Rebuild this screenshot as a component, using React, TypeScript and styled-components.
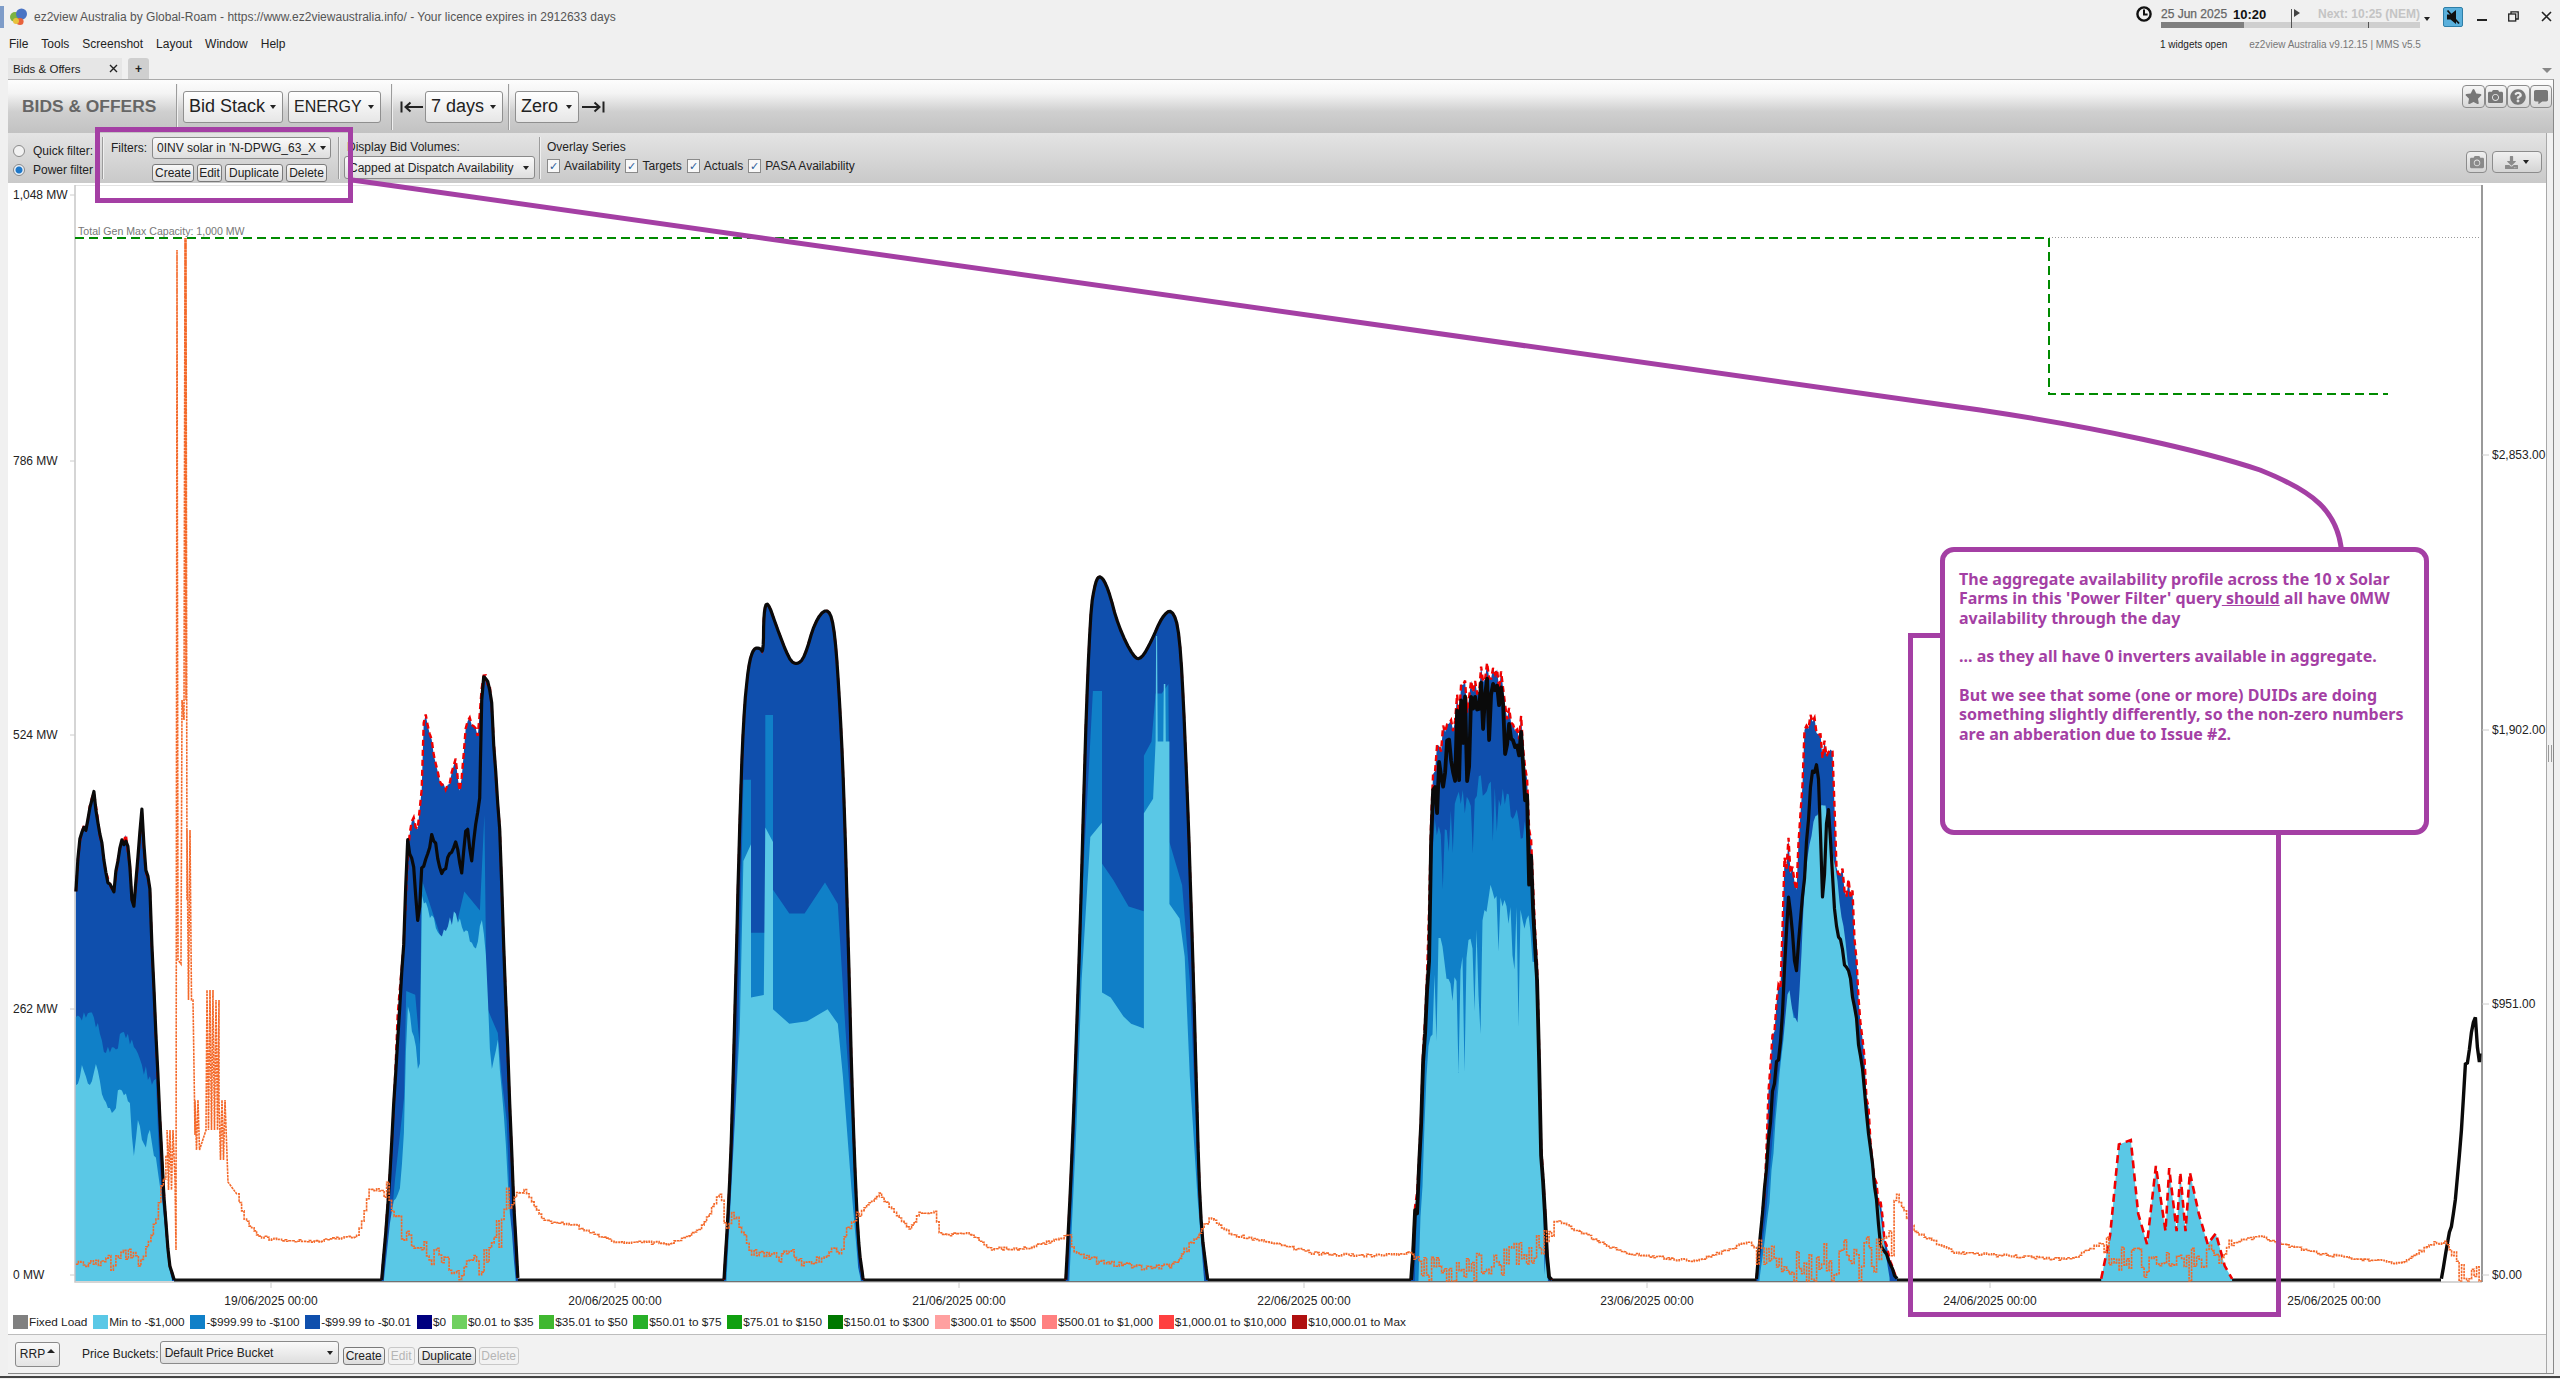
import React from 'react';
import styled, { createGlobalStyle } from 'styled-components';
import { FaStar, FaCamera, FaQuestionCircle, FaCommentAlt, FaDownload } from 'react-icons/fa';

type Pt = [number, number];

const PURPLE = '#a43fa4';
const LIGHT = '#5ac8e6';
const MID = '#1080c8';
const DARK = '#0f4fad';
const BASE = 1281;

// zoomed reference coordinates back to page pixels
const z6 = (p: Pt[]): Pt[] => p.map(([x, y]) => [x / 2.24, 700 + y / 2.613]);
const z7 = (p: Pt[]): Pt[] => p.map(([x, y]) => [700 + x / 1.96, 550 + y / 2.09]);
const z8 = (p: Pt[]): Pt[] => p.map(([x, y]) => [1400 + x / 1.352, 650 + y / 2.306]);

let seed = 48271;
const rnd = () => {
  seed = (seed * 16807) % 2147483647;
  return seed / 2147483647;
};

const yAt = (pts: Pt[], x: number) => {
  for (let i = 1; i < pts.length; i++) {
    if (x <= pts[i][0]) {
      const [x0, y0] = pts[i - 1];
      const [x1, y1] = pts[i];
      if (x1 === x0) return y1;
      return y0 + ((y1 - y0) * (x - x0)) / (x1 - x0);
    }
  }
  return pts[pts.length - 1][1];
};

const noisy = (pts: Pt[], amp: number, step = 2, spike = 0): Pt[] => {
  const out: Pt[] = [];
  const end = pts[pts.length - 1][0];
  for (let x = pts[0][0]; x <= end; x += step) {
    const base = yAt(pts, x);
    const fade = Math.min(1, (BASE - base) / 70);
    const r = rnd();
    const extra = r > 0.8 ? rnd() * spike : 0;
    out.push([x, Math.min(BASE, base + ((rnd() - 0.5) * amp + extra) * fade)]);
  }
  out.push(pts[pts.length - 1]);
  return out;
};

// corner cutting, for the calm days whose curves are smooth
const smooth = (pts: Pt[]): Pt[] => {
  let cur = pts;
  for (let k = 0; k < 2; k++) {
    const next: Pt[] = [cur[0]];
    for (let i = 0; i < cur.length - 1; i++) {
      const [ax, ay] = cur[i];
      const [bx, by] = cur[i + 1];
      next.push([ax * 0.75 + bx * 0.25, ay * 0.75 + by * 0.25]);
      next.push([ax * 0.25 + bx * 0.75, ay * 0.25 + by * 0.75]);
    }
    next.push(cur[cur.length - 1]);
    cur = next;
  }
  return cur;
};

const below = (layer: Pt[], top: Pt[]): Pt[] => layer.map(([x, y]) => [x, Math.max(y, yAt(top, x))]);
const line = (p: Pt[]) => 'M' + p.map(([x, y]) => `${x.toFixed(1)} ${y.toFixed(1)}`).join('L');
const area = (p: Pt[]) => `${line(p)}L${p[p.length - 1][0].toFixed(1)} ${BASE}L${p[0][0].toFixed(1)} ${BASE}Z`;

interface Day {
  top: Pt[];
  mid: Pt[];
  light: Pt[];
  actual: Pt[];
}

const day1Base = z6([[170, 1515], [170, 500], [178, 365], [190, 330], [195, 345], [200, 280], [210, 240], [222, 340], [240, 470], [255, 500], [268, 380], [282, 360], [290, 420], [298, 570], [318, 285], [325, 450], [335, 470], [340, 640], [350, 900], [365, 1250], [378, 1470], [390, 1515]]);
const day1Top = noisy(day1Base, 7);
const day2Base = z6([[855, 1515], [870, 1300], [885, 1000], [890, 830], [905, 620], [915, 360], [925, 300], [935, 350], [945, 240], [950, 20], [965, 100], [985, 220], [1005, 230], [1020, 150], [1030, 250], [1045, 50], [1060, 60], [1070, 100], [1082, -70], [1100, -25], [1105, 100], [1120, 350], [1130, 700], [1140, 1000], [1150, 1300], [1160, 1510]]);
const day2Top = noisy(day2Base, 8);
const day3Top = smooth(z7([[47, 1525], [60, 1300], [70, 900], [77, 600], [85, 350], [95, 240], [105, 205], [118, 205], [124, 215], [125, 130], [132, 105], [150, 160], [175, 230], [190, 240], [205, 225], [225, 150], [248, 120], [262, 150], [272, 280], [282, 500], [290, 800], [300, 1200], [310, 1450], [320, 1525]]));
const day4Top = smooth(z7([[717, 1525], [730, 1250], [745, 800], [755, 400], [765, 130], [775, 65], [785, 52], [800, 80], [820, 160], [850, 225], [865, 228], [885, 190], [905, 140], [925, 122], [940, 170], [950, 370], [960, 650], [970, 1000], [980, 1400], [995, 1525]]));
const day5Base = z8([[15, 1452], [25, 1170], [35, 800], [45, 250], [50, 230], [65, 180], [85, 110], [100, 100], [115, 55], [135, 60], [150, 190], [165, 180], [175, 400], [185, 700], [190, 1100], [200, 1440], [205, 1452]]);
const day5Top = noisy(day5Base, 34);
const day6Base = z8([[482, 1450], [495, 1200], [500, 950], [515, 750], [520, 500], [525, 460], [535, 570], [548, 180], [560, 160], [572, 230], [585, 240], [590, 500], [598, 520], [612, 580], [620, 800], [630, 1000], [640, 1200], [660, 1400], [672, 1450]]);
const day6Top = noisy(day6Base, 26);

const days: Day[] = [
  {
    top: day1Top,
    mid: below(noisy(z6([[170, 1515], [170, 840], [205, 800], [230, 900], [260, 920], [270, 870], [300, 900], [320, 960], [350, 1000], [360, 1280], [378, 1490], [385, 1515]]), 14), day1Top),
    light: below(noisy(z6([[170, 1515], [170, 1010], [185, 960], [200, 1000], [215, 960], [235, 1060], [258, 1080], [265, 1020], [290, 1040], [298, 1200], [310, 1100], [325, 1180], [335, 1110], [345, 1180], [360, 1280], [378, 1480], [385, 1515]]), 10), day1Top),
    actual: noisy(day1Base, 9),
  },
  {
    top: day2Top,
    mid: below(z6([[865, 1515], [885, 1250], [905, 1040], [910, 760], [930, 770], [940, 900], [945, 470], [990, 630], [1020, 600], [1040, 500], [1075, 550], [1085, 300], [1090, 800], [1100, 830], [1115, 870], [1125, 1000], [1135, 1100], [1145, 1400], [1155, 1515]]), day2Top),
    light: below(noisy(z6([[860, 1515], [880, 1300], [895, 1300], [905, 1120], [912, 800], [930, 900], [940, 1000], [945, 510], [985, 620], [1020, 560], [1040, 610], [1050, 620], [1065, 670], [1080, 560], [1090, 690], [1100, 980], [1115, 880], [1128, 1080], [1140, 1300], [1155, 1515]]), 12), day2Top),
    actual: noisy(z6([[855, 1515], [870, 1300], [885, 1000], [890, 900], [905, 620], [912, 370], [925, 420], [937, 590], [945, 440], [970, 350], [990, 460], [1020, 370], [1035, 450], [1045, 310], [1055, 430], [1075, 250], [1080, -60], [1082, -70], [1100, -25], [1105, 100], [1120, 350], [1130, 700], [1140, 1000], [1150, 1300], [1160, 1510]]), 8),
  },
  {
    top: day3Top,
    mid: z7([[50, 1525], [65, 1300], [75, 1000], [85, 480], [100, 480], [100, 800], [128, 800], [128, 345], [143, 345], [143, 710], [175, 760], [205, 760], [245, 695], [270, 740], [285, 1000], [298, 1200], [310, 1500], [315, 1525]]),
    light: z7([[52, 1525], [68, 1200], [78, 1000], [85, 650], [100, 615], [100, 935], [125, 930], [128, 580], [143, 610], [143, 960], [175, 990], [210, 985], [250, 960], [270, 990], [280, 1100], [298, 1350], [310, 1500], [315, 1525]]),
    actual: day3Top,
  },
  {
    top: day4Top,
    mid: z7([[722, 1525], [735, 1200], [750, 700], [770, 295], [788, 295], [788, 655], [810, 690], [840, 745], [870, 755], [870, 430], [885, 400], [893, 300], [905, 300], [918, 280], [920, 610], [945, 700], [960, 900], [972, 1200], [985, 1525]]),
    light: z7([[724, 1525], [738, 1200], [748, 900], [765, 600], [788, 570], [788, 925], [805, 935], [830, 975], [845, 990], [870, 1000], [870, 550], [888, 520], [893, 400], [894, 180], [896, 180], [897, 400], [908, 400], [909, 280], [912, 280], [913, 400], [920, 400], [920, 740], [940, 770], [950, 850], [960, 1100], [975, 1350], [988, 1525]]),
    actual: day4Top,
  },
  {
    top: day5Top,
    mid: below(noisy(z8([[20, 1452], [35, 700], [45, 420], [60, 400], [100, 320], [125, 300], [165, 400], [178, 500], [188, 1000], [198, 1452]]), 30, 2, 70), day5Top),
    light: below(noisy(z8([[25, 1452], [35, 1000], [45, 800], [50, 650], [60, 700], [70, 800], [100, 650], [125, 560], [145, 600], [160, 620], [175, 630], [185, 800], [190, 1100], [200, 1452]]), 26, 2, 110), day5Top),
    actual: day5Top.map(([x, y]) => {
      const k = Math.min(1, (BASE - y) / 300);
      return [x, Math.min(BASE, y + (16 + (rnd() > 0.55 ? rnd() * 55 : 0)) * k)] as Pt;
    }),
  },
  {
    top: day6Top,
    mid: below(z8([[484, 1450], [495, 1300], [500, 1200], [510, 1000], [525, 800], [540, 880], [548, 700], [560, 600], [580, 600], [600, 800], [640, 1200], [660, 1450]]), day6Top),
    light: below(noisy(z8([[486, 1450], [498, 1300], [510, 1040], [525, 780], [537, 880], [548, 520], [560, 380], [575, 350], [598, 620], [620, 900], [640, 1200], [662, 1450]]), 10), day6Top),
    actual: noisy(z8([[482, 1450], [495, 1200], [505, 1000], [515, 900], [525, 550], [535, 750], [548, 500], [555, 300], [565, 240], [572, 620], [578, 350], [590, 650], [610, 760], [620, 900], [630, 1050], [640, 1200], [650, 1380], [660, 1400], [668, 1440], [672, 1450]]), 14),
  },
];

const day7Top = z8([[948, 1450], [960, 1350], [972, 1140], [988, 1130], [998, 1300], [1010, 1370], [1022, 1190], [1035, 1340], [1040, 1195], [1050, 1340], [1055, 1205], [1062, 1340], [1068, 1205], [1080, 1300], [1092, 1370], [1103, 1345], [1115, 1420], [1125, 1450]]);
const day8Actual = z8([[1408, 1450], [1420, 1330], [1425, 1300], [1435, 1100], [1440, 960], [1445, 930], [1450, 850], [1455, 840], [1458, 960], [1460, 930]]);

const zig = (x0: number, x1: number, y0: number, y1: number): Pt[] => {
  const out: Pt[] = [];
  let up = true;
  for (let x = x0; x <= x1; x += 1.5) {
    out.push([x, up ? y0 : y1]);
    up = !up;
  }
  return out;
};

const rrpBefore: Pt[] = z6([[170, 1470], [230, 1465], [285, 1440], [310, 1470], [330, 1430], [350, 1350], [360, 1280], [372, 1190]]);
const rrpSpike: Pt[] = [
  ...zig(167, 174, 1130, 1190),
  [175, 1180], [176, 1250], [177, 250], [178, 960], [181, 964], [182, 700], [184, 720], [185, 238], [186, 700], [186, 238], [187, 900],
  ...zig(187, 192, 830, 1000),
  [193, 1000], [195, 1135],
  ...zig(195, 200, 1100, 1150),
  [206, 1130],
  ...zig(207, 213, 990, 1130),
  ...zig(213, 219, 1000, 1130),
  ...zig(219, 225, 1100, 1160),
  [228, 1182],
];
const rrpAfter: Pt[] = [
  ...z6([[530, 1290], [545, 1350], [575, 1400], [610, 1410], [700, 1415], [800, 1400], [815, 1340], [825, 1280], [870, 1280], [875, 1350], [910, 1400], [950, 1440], [1000, 1460], [1050, 1490], [1100, 1450], [1130, 1310], [1175, 1280], [1215, 1360], [1290, 1375], [1370, 1415], [1500, 1420]]),
  ...z7([[0, 1420], [40, 1340], [50, 1420], [65, 1385], [100, 1470], [180, 1470], [205, 1495], [270, 1460], [300, 1395], [350, 1345], [410, 1420], [430, 1385], [460, 1385], [470, 1430], [530, 1430], [565, 1460], [640, 1460], [700, 1440], [725, 1430], [730, 1470], [800, 1490], [870, 1500], [930, 1490], [980, 1420], [1000, 1395], [1040, 1430], [1130, 1450], [1200, 1470], [1300, 1475], [1395, 1470]]),
  ...z8([[20, 1410], [60, 1430], [110, 1420], [170, 1390], [195, 1360], [210, 1315], [240, 1340], [270, 1365], [300, 1390], [400, 1410], [470, 1365], [490, 1395], [530, 1420], [600, 1400], [640, 1390], [665, 1330], [672, 1265], [695, 1340], [750, 1390], [850, 1400], [905, 1405], [950, 1365], [970, 1395], [1030, 1420], [1090, 1395], [1120, 1370], [1165, 1350], [1180, 1365], [1250, 1395], [1350, 1415], [1400, 1365], [1420, 1395], [1430, 1440], [1455, 1420], [1460, 1440]]),
];

const dayBands: [number, number, number][] = [
  [382, 518, 24], [724, 863, 8], [1066, 1208, 5], [1412, 1552, 26], [1756, 1897, 34], [2101, 2232, 24], [2441, 2482, 30], [75, 174, 10],
];
const rrpNoise = (pts: Pt[]): Pt[] => {
  const out: Pt[] = [];
  for (let x = pts[0][0]; x <= pts[pts.length - 1][0]; x += 2.5) {
    const band = dayBands.find(([a, b]) => x >= a && x <= b);
    const amp = band ? band[2] : 3;
    const y = yAt(pts, x) + (rnd() - 0.5) * amp + (band && rnd() > 0.85 ? rnd() * amp : 0);
    out.push([x, Math.min(BASE, y)]);
    out.push([x + 2.5, Math.min(BASE, y)]);
  }
  return out;
};
const rrpLine = [...rrpNoise(rrpBefore), ...rrpSpike, ...rrpNoise(rrpAfter)];

const leftAxis: [string, number][] = [['1,048 MW', 199], ['786 MW', 465], ['524 MW', 739], ['262 MW', 1013], ['0 MW', 1279]];
const rightAxis: [string, number][] = [['$2,853.00', 459], ['$1,902.00', 734], ['$951.00', 1008], ['$0.00', 1279]];
const dateTicks: [string, number][] = [
  ['19/06/2025 00:00', 271], ['20/06/2025 00:00', 615], ['21/06/2025 00:00', 959], ['22/06/2025 00:00', 1304],
  ['23/06/2025 00:00', 1647], ['24/06/2025 00:00', 1990], ['25/06/2025 00:00', 2334],
];

const legendItems: [string, string][] = [
  ['#808080', 'Fixed Load'], [LIGHT, 'Min to -$1,000'], [MID, '-$999.99 to -$100'], [DARK, '-$99.99 to -$0.01'], ['#000080', '$0'],
  ['#70d060', '$0.01 to $35'], ['#40b830', '$35.01 to $50'], ['#28b028', '$50.01 to $75'], ['#10a010', '$75.01 to $150'], ['#007800', '$150.01 to $300'],
  ['#ffa0a0', '$300.01 to $500'], ['#ff8080', '$500.01 to $1,000'], ['#ff4040', '$1,000.01 to $10,000'], ['#b01010', '$10,000.01 to Max'],
];

const GlobalStyle = createGlobalStyle`
  html, body {
    margin: 0;
    padding: 0;
    background: #f0f0f0;
    overflow: hidden;
  }
  body {
    font-family: "Liberation Sans", Arial, sans-serif;
    font-size: 12px;
    color: #222;
  }
`;

const Page = styled.div`
  position: relative;
  width: 2560px;
  height: 1379px;
  display: flex;
  flex-direction: column;
  background: #f0f0f0;
  overflow: hidden;
`;

const TopArea = styled.div`
  display: flex;
  justify-content: space-between;
  height: 58px;
`;

const TitleColumn = styled.div`
  display: flex;
  flex-direction: column;
`;

const TitleRow = styled.div`
  display: flex;
  align-items: center;
  height: 33px;
  gap: 6px;
`;

const WindowTab = styled.div`
  width: 4px;
  height: 22px;
  background: #7e9cc8;
`;

const TitleText = styled.span`
  color: #555;
  font-size: 12px;
`;

const MenuRow = styled.div`
  display: flex;
  gap: 13px;
  padding-left: 9px;
  height: 22px;
  align-items: center;
  color: #222;
`;

const StatusColumn = styled.div`
  display: flex;
  flex-direction: column;
  width: 424px;
  padding-top: 6px;
  box-sizing: border-box;
  position: relative;
`;

const ClockRow = styled.div`
  display: flex;
  align-items: flex-start;
  height: 30px;
`;

const Timeline = styled.div`
  width: 259px;
  margin-left: 9px;
  position: relative;
`;

const DateRow = styled.div`
  display: flex;
  height: 16px;
  align-items: center;
  font-weight: 700;
`;

const DateText = styled.span`
  color: #666;
  font-weight: 400;
  -webkit-text-stroke: 0.25px #666;
`;

const TimeText = styled.span`
  margin-left: 6px;
  color: #111;
  font-size: 13px;
`;

const NextText = styled.span`
  margin-left: auto;
  color: #c4c4c4;
  white-space: nowrap;
`;

const ProgressTrack = styled.div`
  height: 6px;
  background: #cfcfcf;
`;

const ProgressFill = styled.div`
  width: 83px;
  height: 100%;
  background: #7f7f7f;
`;

const TimeMarker = styled.div`
  position: absolute;
  left: 130px;
  bottom: 0;
  width: 1px;
  height: 19px;
  background: #555;
`;

const PlayMark = styled.div`
  position: absolute;
  left: 133px;
  top: 3px;
  width: 0;
  height: 0;
  border-left: 6px solid #444;
  border-top: 4px solid transparent;
  border-bottom: 4px solid transparent;
`;

const TickMark = styled.div`
  position: absolute;
  left: 207px;
  bottom: 0;
  width: 1px;
  height: 6px;
  background: #555;
`;

const SmallCaret = styled.div`
  width: 0;
  height: 0;
  margin: 11px 0 0 4px;
  border-top: 4px solid #222;
  border-left: 3.5px solid transparent;
  border-right: 3.5px solid transparent;
`;

const MuteButton = styled.div`
  width: 20px;
  height: 20px;
  margin: 1px 0 0 13px;
  background: #5ab0dc;
  border: 1px solid #2f7fa8;
  border-radius: 2px;
  display: flex;
  align-items: center;
  justify-content: center;
  box-sizing: border-box;
`;

const WindowControls = styled.div`
  display: flex;
  margin-left: 9px;
  align-items: center;
  height: 20px;
`;

const WindowButton = styled.div<{ $w: number }>`
  width: ${(p) => p.$w}px;
  display: flex;
  justify-content: center;
  color: #222;
`;

const InfoRow = styled.div`
  display: flex;
  padding-left: 24px;
  height: 16px;
  align-items: center;
`;

const InfoText = styled.span<{ $muted?: boolean }>`
  color: ${(p) => (p.$muted ? '#777' : '#222')};
  margin-left: ${(p) => (p.$muted ? '22px' : '0')};
  font-size: 10px;
`;

const TabRow = styled.div`
  display: flex;
  height: 21px;
  padding-left: 8px;
  gap: 6px;
  position: relative;
`;

const Tab = styled.div`
  width: 114px;
  background: #e6e6e6;
  display: flex;
  align-items: center;
  justify-content: space-between;
  padding: 0 4px 0 5px;
  box-sizing: border-box;
  font-size: 11.5px;
`;

const AddTab = styled.div`
  width: 21px;
  background: #cfcfcf;
  border-radius: 3px 3px 0 0;
  display: flex;
  align-items: center;
  justify-content: center;
  font-weight: 700;
`;

const OverflowCaret = styled.div`
  position: absolute;
  right: 8px;
  top: 10px;
  width: 0;
  height: 0;
  border-top: 5px solid #888;
  border-left: 5px solid transparent;
  border-right: 5px solid transparent;
`;

const Widget = styled.div`
  margin-left: 8px;
  width: 2546px;
  height: 1295px;
  display: flex;
  flex-direction: column;
  border-top: 1px solid #aaa;
  border-bottom: 1px solid #888;
  border-right: 1px solid #888;
  box-sizing: border-box;
  background: #fff;
`;

const HeaderBar = styled.div`
  height: 53px;
  flex: none;
  display: flex;
  align-items: center;
  background: linear-gradient(#fdfdfd 0%, #f4f4f4 25%, #cfcfcf 60%, #c2c2c2 100%);
`;

const WidgetTitle = styled.div`
  width: 168px;
  padding-left: 14px;
  box-sizing: border-box;
  font-size: 17.4px;
  font-weight: 700;
  color: #666;
  white-space: nowrap;
`;

const Divider = styled.div<{ $h?: number }>`
  flex: none;
  width: 1px;
  height: ${(p) => p.$h ?? 46}px;
  background: #9c9c9c;
  border-right: 1px solid #f0f0f0;
`;

const HeaderGroup = styled.div<{ $gap: number; $left: number; $right: number }>`
  display: flex;
  align-items: center;
  gap: ${(p) => p.$gap}px;
  margin: 0 ${(p) => p.$right}px 0 ${(p) => p.$left}px;
`;

const BigButton = styled.div<{ $w: number; $fs?: number }>`
  width: ${(p) => p.$w}px;
  height: 32px;
  box-sizing: border-box;
  border: 1px solid #8f8f8f;
  border-radius: 3px;
  background: linear-gradient(#fff, #e6e6e6);
  display: flex;
  align-items: center;
  justify-content: space-between;
  padding: 0 6px 0 5px;
  font-size: ${(p) => p.$fs ?? 18}px;
  color: #222;
`;

const Caret = styled.span`
  width: 0;
  height: 0;
  border-top: 4px solid #222;
  border-left: 3px solid transparent;
  border-right: 3px solid transparent;
`;

const IconButtons = styled.div`
  margin-left: auto;
  align-self: flex-start;
  display: flex;
  margin-top: 5px;
  padding-right: 1px;
`;

const IconButton = styled.div`
  width: 22.5px;
  height: 23px;
  box-sizing: border-box;
  border: 1px solid #8c8c8c;
  border-radius: 4px;
  background: linear-gradient(#f6f6f6, #d8d8d8);
  display: flex;
  align-items: center;
  justify-content: center;
  color: #777;
`;

const Body = styled.div`
  flex: 1;
  display: flex;
  min-height: 0;
`;

const Content = styled.div`
  flex: 1;
  min-width: 0;
  display: flex;
  flex-direction: column;
`;

const ScrollTrack = styled.div`
  width: 7px;
  flex: none;
  background: #f1f1f1;
  border-left: 1px solid #a8a8a8;
  box-sizing: border-box;
  padding-top: 612px;
`;

const ScrollGrip = styled.div`
  width: 4px;
  height: 17px;
  margin-left: 1px;
  border-left: 1px solid #999;
  border-right: 1px solid #999;
  box-sizing: border-box;
`;

const FilterBar = styled.div`
  height: 50px;
  flex: none;
  display: flex;
  align-items: stretch;
  background: linear-gradient(#e4e4e4, #c9c9c9);
  border-bottom: 2px solid #fff;
  box-sizing: content-box;
`;

const RadioGroup = styled.div`
  width: 94px;
  padding-left: 5px;
  box-sizing: border-box;
  display: flex;
  flex-direction: column;
  justify-content: center;
  gap: 5px;
  padding-top: 4px;
  overflow: hidden;
`;

const RadioRow = styled.label`
  display: flex;
  align-items: center;
  gap: 8px;
  height: 14px;
  white-space: nowrap;
`;

const RadioDot = styled.span<{ $on?: boolean }>`
  flex: none;
  width: 12px;
  height: 12px;
  border-radius: 50%;
  border: 1px solid #8a8a8a;
  background: ${(p) => (p.$on ? 'radial-gradient(circle, #1f78c8 0 3px, #e8f0f8 4px)' : '#f2f2f2')};
  box-sizing: border-box;
`;

const SideDivider = styled(Divider)`
  align-self: center;
`;

const FilterGroup = styled.div`
  width: 234px;
  box-sizing: border-box;
  padding: 4px 0 0 7px;
  display: flex;
  flex-direction: column;
  gap: 5px;
`;

const FilterTop = styled.div`
  display: flex;
  align-items: center;
  gap: 5px;
`;

const SelectBox = styled.div<{ $w: number; $h: number }>`
  width: ${(p) => p.$w}px;
  height: ${(p) => p.$h}px;
  box-sizing: border-box;
  border: 1px solid #8a8a8a;
  border-radius: 3px;
  background: linear-gradient(#fafafa, #dedede);
  display: flex;
  align-items: center;
  justify-content: space-between;
  padding: 0 5px 0 4px;
  gap: 4px;
`;

const SelectText = styled.span`
  flex: 1;
  white-space: nowrap;
`;

const SmallButtons = styled.div`
  display: flex;
  gap: 3px;
  padding-left: 41px;
`;

const SmallButton = styled.div<{ $w: number; $off?: boolean }>`
  width: ${(p) => p.$w}px;
  height: 18px;
  box-sizing: border-box;
  border: 1px solid ${(p) => (p.$off ? '#c8c8c8' : '#7a7a7a')};
  border-radius: 3px;
  background: ${(p) => (p.$off ? '#f2f2f2' : 'linear-gradient(#f8f8f8, #dcdcdc)')};
  color: ${(p) => (p.$off ? '#b5b5b5' : '#222')};
  display: flex;
  align-items: center;
  justify-content: center;
`;

const StackGroup = styled.div`
  padding: 7px 4px 0 4px;
  display: flex;
  flex-direction: column;
  gap: 2px;
`;

const StackLabel = styled.span`
  height: 14px;
  white-space: nowrap;
  padding-left: 3px;
`;

const OverlayGroup = styled.div`
  padding: 7px 0 0 6px;
  display: flex;
  flex-direction: column;
  gap: 5px;
`;

const FieldLabel = styled.span`
  height: 14px;
  white-space: nowrap;
`;

const CheckRow = styled.div`
  display: flex;
  gap: 5px;
`;

const CheckItem = styled.label`
  display: flex;
  align-items: center;
  gap: 4px;
  white-space: nowrap;
`;

const CheckBox = styled.span`
  width: 13px;
  height: 14px;
  box-sizing: border-box;
  border: 1px solid #8a8a8a;
  background: #f8f8f8;
  color: #2a5c9a;
  font-size: 11px;
  line-height: 12px;
  text-align: center;
`;

const FilterTools = styled.div`
  margin-left: auto;
  display: flex;
  align-items: center;
  gap: 5px;
  padding: 8px 4px 0 0;
  align-self: center;
`;

const ToolButton = styled.div<{ $w: number }>`
  width: ${(p) => p.$w}px;
  height: 22px;
  box-sizing: border-box;
  border: 1px solid #8c8c8c;
  border-radius: 4px;
  background: linear-gradient(#f0f0f0, #d4d4d4);
  display: flex;
  align-items: center;
  justify-content: center;
  gap: 5px;
  color: #8a8a8a;
`;

const ChartSvg = styled.svg`
  display: block;
  flex: none;

  text {
    font-family: "Liberation Sans", Arial, sans-serif;
    font-size: 12px;
    fill: #222;
  }
`;

const Legend = styled.div`
  height: 24px;
  flex: none;
  display: flex;
  align-items: center;
  gap: 5.8px;
  padding-left: 5px;
  background: #fff;
  font-size: 11.8px;
`;

const LegendItem = styled.div`
  display: flex;
  align-items: center;
  gap: 1px;
  white-space: nowrap;
`;

const Swatch = styled.span<{ $c: string }>`
  width: 15px;
  height: 14px;
  background: ${(p) => p.$c};
`;

const BottomBar = styled.div`
  flex: 1;
  display: flex;
  align-items: center;
  border-top: 1px solid #bdbdbd;
  padding-left: 7px;
  background: #f2f2f2;
`;

const RrpButton = styled.div`
  width: 45px;
  height: 25px;
  box-sizing: border-box;
  border: 1px solid #8a8a8a;
  border-radius: 3px;
  background: linear-gradient(#fafafa, #e4e4e4);
  display: flex;
  align-items: center;
  justify-content: center;
  gap: 2px;
`;

const RrpCaret = styled.span`
  width: 0;
  height: 0;
  margin-bottom: 6px;
  border-bottom: 4px solid #222;
  border-left: 4px solid transparent;
  border-right: 4px solid transparent;
`;

const BucketLabel = styled.span`
  margin: 0 1px 0 22px;
`;

const BucketButtons = styled.div`
  display: flex;
  gap: 3px;
  margin-left: 4px;
  padding-top: 4px;
`;

const BucketSelect = styled(SelectBox)`
  margin-bottom: 3px;
`;

const TaskLine = styled.div`
  height: 2px;
  margin-top: 2px;
  background: #444;
`;

// annotation layer, drawn over the screenshot
const FilterHighlight = styled.div`
  position: absolute;
  left: 95px;
  top: 127px;
  width: 258px;
  height: 76px;
  box-sizing: border-box;
  border: 5px solid ${PURPLE};
`;

const CalloutBracket = styled.div`
  position: absolute;
  left: 1908px;
  top: 633px;
  width: 373px;
  height: 684px;
  box-sizing: border-box;
  border: 5px solid ${PURPLE};
`;

const Callout = styled.div`
  position: absolute;
  left: 1940px;
  top: 547px;
  width: 489px;
  height: 288px;
  box-sizing: border-box;
  padding: 18px 14px;
  border: 5px solid ${PURPLE};
  border-radius: 14px;
  background: #fff;
  color: ${PURPLE};
  font-family: "Noto Sans", "DejaVu Sans", sans-serif;
  font-weight: 700;
  font-size: 16px;
  line-height: 19.33px;
  white-space: nowrap;
`;

const CalloutLead = styled.svg`
  position: absolute;
  left: 0;
  top: 0;
  pointer-events: none;
`;

const ClockIcon = () => (
  <svg width="16" height="16" viewBox="0 0 16 16" fill="none" stroke="#111" strokeWidth="2.4" style={{ flex: 'none' }}>
    <circle cx="8" cy="8" r="6.6" />
    <path d="M8 3.6V8.6H11.6" strokeWidth="2" />
  </svg>
);

const MuteIcon = () => (
  <svg width="16" height="16" viewBox="0 0 16 16">
    <path d="M2 5.5H5.5L11 1V15L5.5 10.5H2Z" fill="#111" />
    <path d="M2.5 1.5L14 14.5" stroke="#111" strokeWidth="1.8" />
  </svg>
);

const ArrowToBar = ({ right }: { right?: boolean }) => (
  <svg width="24" height="12" viewBox="0 0 24 12" fill="none" stroke="#222" strokeWidth="2" style={{ transform: right ? 'scaleX(-1)' : undefined }}>
    <path d="M1.5 0.5V11.5" />
    <path d="M23 6H6" />
    <path d="M10.5 1.5L5.5 6L10.5 10.5" />
  </svg>
);

const Logo = () => (
  <svg width="18" height="18" viewBox="0 0 18 18" style={{ flex: 'none' }}>
    <circle cx="5" cy="9" r="5" fill="#7db343" />
    <circle cx="11.5" cy="6" r="5.5" fill="#4a74c4" />
    <circle cx="10" cy="13.5" r="3.6" fill="#e8623c" />
    <circle cx="6" cy="13" r="3" fill="#e8c23c" />
  </svg>
);

const App: React.FC = () => {
  return (
    <Page>
      <GlobalStyle />
      <TopArea>
        <TitleColumn>
          <TitleRow>
            <WindowTab />
            <Logo />
            <TitleText>ez2view Australia by Global-Roam - https://www.ez2viewaustralia.info/ - Your licence expires in 2912633 days</TitleText>
          </TitleRow>
          <MenuRow>
            {['File', 'Tools', 'Screenshot', 'Layout', 'Window', 'Help'].map((m) => (
              <span key={m}>{m}</span>
            ))}
          </MenuRow>
        </TitleColumn>
        <StatusColumn>
          <ClockRow>
            <ClockIcon />
            <Timeline>
              <DateRow>
                <DateText>25 Jun 2025</DateText>
                <TimeText>10:20</TimeText>
                <NextText>Next: 10:25 (NEM)</NextText>
              </DateRow>
              <ProgressTrack>
                <ProgressFill />
              </ProgressTrack>
              <TimeMarker />
              <PlayMark />
              <TickMark />
            </Timeline>
            <SmallCaret />
            <MuteButton>
              <MuteIcon />
            </MuteButton>
            <WindowControls>
              <WindowButton $w={20}>
                <svg width="10" height="10" viewBox="0 0 10 10"><path d="M0 9H10" stroke="#222" strokeWidth="2" /></svg>
              </WindowButton>
              <WindowButton $w={42}>
                <svg width="11" height="11" viewBox="0 0 11 11" fill="none" stroke="#222" strokeWidth="1.3">
                  <rect x="0.7" y="3" width="7" height="7" />
                  <path d="M3 3V0.8H10.2V8H8" />
                </svg>
              </WindowButton>
              <WindowButton $w={24}>
                <svg width="11" height="11" viewBox="0 0 11 11" stroke="#222" strokeWidth="1.6"><path d="M1 1L10 10M10 1L1 10" /></svg>
              </WindowButton>
            </WindowControls>
          </ClockRow>
          <InfoRow>
            <InfoText>1 widgets open</InfoText>
            <InfoText $muted>ez2view Australia v9.12.15 | MMS v5.5</InfoText>
          </InfoRow>
        </StatusColumn>
      </TopArea>

      <TabRow>
        <Tab>
          Bids &amp; Offers
          <svg width="9" height="9" viewBox="0 0 9 9" stroke="#222" strokeWidth="1.4"><path d="M1 1L8 8M8 1L1 8" /></svg>
        </Tab>
        <AddTab>+</AddTab>
        <OverflowCaret />
      </TabRow>

      <Widget>
        <HeaderBar>
          <WidgetTitle>BIDS &amp; OFFERS</WidgetTitle>
          <Divider />
          <HeaderGroup $gap={5} $left={5} $right={10}>
            <BigButton $w={100}>Bid Stack<Caret /></BigButton>
            <BigButton $w={93} $fs={16}>ENERGY<Caret /></BigButton>
          </HeaderGroup>
          <Divider />
          <HeaderGroup $gap={1} $left={7} $right={5}>
            <ArrowToBar />
            <BigButton $w={78}>7 days<Caret /></BigButton>
          </HeaderGroup>
          <Divider />
          <HeaderGroup $gap={2} $left={5} $right={0}>
            <BigButton $w={64}>Zero<Caret /></BigButton>
            <ArrowToBar right />
          </HeaderGroup>
          <IconButtons>
            <IconButton><FaStar size={17} /></IconButton>
            <IconButton><FaCamera size={15} /></IconButton>
            <IconButton><FaQuestionCircle size={16} /></IconButton>
            <IconButton><FaCommentAlt size={14} /></IconButton>
          </IconButtons>
        </HeaderBar>

        <Body>
          <Content>
            <FilterBar>
              <RadioGroup>
                <RadioRow><RadioDot />Quick filter:</RadioRow>
                <RadioRow><RadioDot $on />Power filter</RadioRow>
              </RadioGroup>
              <SideDivider $h={42} />
              <FilterGroup>
                <FilterTop>
                  <span>Filters:</span>
                  <SelectBox $w={179} $h={22}>
                    <SelectText>0INV solar in 'N-DPWG_63_X</SelectText>
                    <Caret />
                  </SelectBox>
                </FilterTop>
                <SmallButtons>
                  <SmallButton $w={42}>Create</SmallButton>
                  <SmallButton $w={25}>Edit</SmallButton>
                  <SmallButton $w={58}>Duplicate</SmallButton>
                  <SmallButton $w={41}>Delete</SmallButton>
                </SmallButtons>
              </FilterGroup>
              <SideDivider $h={42} />
              <StackGroup>
                <StackLabel>Display Bid Volumes:</StackLabel>
                <SelectBox $w={191} $h={23}>
                  <SelectText>Capped at Dispatch Availability</SelectText>
                  <Caret />
                </SelectBox>
              </StackGroup>
              <SideDivider $h={42} />
              <OverlayGroup>
                <FieldLabel>Overlay Series</FieldLabel>
                <CheckRow>
                  {['Availability', 'Targets', 'Actuals', 'PASA Availability'].map((c) => (
                    <CheckItem key={c}>
                      <CheckBox>✓</CheckBox>
                      {c}
                    </CheckItem>
                  ))}
                </CheckRow>
              </OverlayGroup>
              <FilterTools>
                <ToolButton $w={21}><FaCamera size={14} /></ToolButton>
                <ToolButton $w={50}><FaDownload size={13} /><Caret /></ToolButton>
              </FilterTools>
            </FilterBar>

            <ChartSvg width={2538} height={1125} viewBox="8 185 2538 1125">
              <path d="M75 185V1282H2482" fill="none" stroke="#c8c8c8" strokeWidth="1.5" />
              <path d="M75 185H2482" fill="none" stroke="#c8c8c8" strokeWidth="1" />
              <path d="M2482 185V1282" fill="none" stroke="#999" strokeWidth="2" />
              {leftAxis.map(([t, y]) => (
                <g key={t}>
                  <text x="13" y={y}>{t}</text>
                  <path d={`M70 ${y - 4}H75`} stroke="#ccc" />
                </g>
              ))}
              {rightAxis.map(([t, y]) => (
                <g key={t}>
                  <text x="2492" y={y}>{t}</text>
                  <path d={`M2482 ${y - 4}H2489`} stroke="#ccc" />
                </g>
              ))}
              {dateTicks.map(([t, x]) => (
                <g key={t}>
                  <path d={`M${x} 1282V1288`} stroke="#ccc" />
                  <text x={x} y="1305" textAnchor="middle">{t}</text>
                </g>
              ))}

              <text x="78" y="235" style={{ fontSize: 10.6, fill: '#777' }}>Total Gen Max Capacity: 1,000 MW</text>
              <path d="M2049 237.5H2482" stroke="#999" strokeDasharray="1 2" fill="none" />
              <path d="M75 238H2049V394H2388" stroke="#008a00" strokeWidth="2" strokeDasharray="9 5" fill="none" />

              <path d="M174 1280H2441" stroke="#111" strokeWidth="3" fill="none" />
              {days.map((d, i) => (
                <g key={i}>
                  <path d={area(d.top)} fill={DARK} />
                  <path d={area(d.mid)} fill={MID} />
                  <path d={area(d.light)} fill={LIGHT} />
                  <path d={line(d.top)} stroke="#f00000" strokeWidth="2.4" strokeDasharray="6 4" fill="none" />
                  <path d={line(d.actual)} stroke="#0a0a0a" strokeWidth={i === 4 ? 3.8 : 3.2} strokeLinejoin="round" fill="none" />
                </g>
              ))}
              <path d={area(day7Top)} fill={LIGHT} />
              <path d={line(day7Top)} stroke="#f00000" strokeWidth="2.6" strokeDasharray="8 5" fill="none" />
              <path d={line(noisy(day8Actual, 10, 2))} stroke="#0a0a0a" strokeWidth="3.4" fill="none" />
              <path d={line(rrpLine)} stroke="#f4692a" strokeWidth="1.6" strokeDasharray="2.5 0.8" fill="none" />
            </ChartSvg>

            <Legend>
              {legendItems.map(([c, t]) => (
                <LegendItem key={t}>
                  <Swatch $c={c} />
                  {t}
                </LegendItem>
              ))}
            </Legend>

            <BottomBar>
              <RrpButton>RRP<RrpCaret /></RrpButton>
              <BucketLabel>Price Buckets:</BucketLabel>
              <BucketSelect $w={179} $h={23}>
                <SelectText>Default Price Bucket</SelectText>
                <Caret />
              </BucketSelect>
              <BucketButtons>
                <SmallButton $w={42}>Create</SmallButton>
                <SmallButton $w={27} $off>Edit</SmallButton>
                <SmallButton $w={58}>Duplicate</SmallButton>
                <SmallButton $w={40} $off>Delete</SmallButton>
              </BucketButtons>
            </BottomBar>
          </Content>
          <ScrollTrack>
            <ScrollGrip />
          </ScrollTrack>
        </Body>
      </Widget>
      <TaskLine />

      <FilterHighlight />
      <CalloutLead width={2560} height={1379} viewBox="0 0 2560 1379" fill="none">
        <path d="M352 180L1980 410C2100 428 2200 450 2260 470C2310 490 2342 510 2342 561" stroke={PURPLE} strokeWidth="5" />
      </CalloutLead>
      <CalloutBracket />
      <Callout>
        The aggregate availability profile across the 10 x Solar<br />
        Farms in this 'Power Filter' query<u> should</u> all have 0MW<br />
        availability through the day<br />
        <br />
        ... as they all have 0 inverters available in aggregate.<br />
        <br />
        But we see that some (one or more) DUIDs are doing<br />
        something slightly differently, so the non-zero numbers<br />
        are an abberation due to Issue #2.
      </Callout>
    </Page>
  );
};

export default App;
